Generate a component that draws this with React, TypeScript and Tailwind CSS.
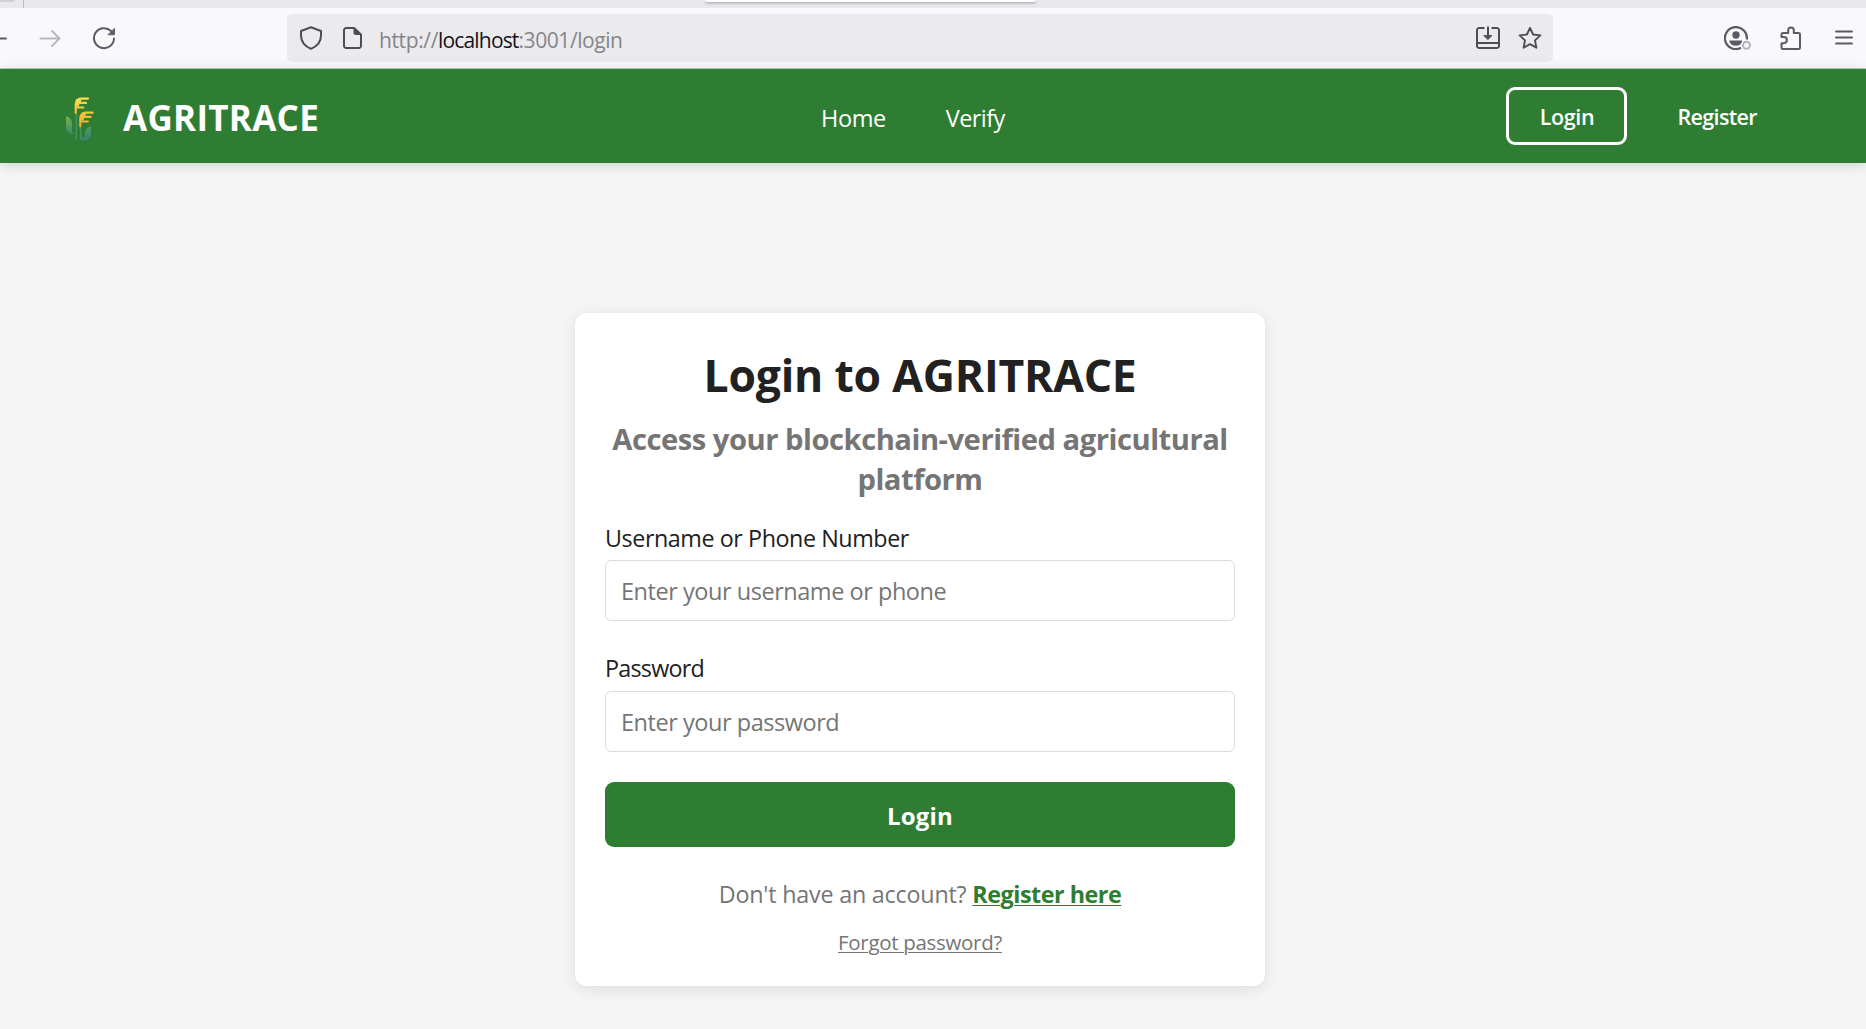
import type { ReactNode } from "react";

function Glyph({ className, children }: { className?: string; children: ReactNode }) {
  return (
    <svg viewBox="0 0 24 24" fill="none" stroke="currentColor" strokeWidth="2" strokeLinecap="round" strokeLinejoin="round" className={`size-6 shrink-0 ${className ?? ""}`}>
      {children}
    </svg>
  );
}

function BrowserChrome() {
  return (
    <header className="flex flex-col text-[#5b5b66]">
      <div className="flex h-2 bg-[#e9e9ed]">
        <div className="h-[2px] w-[15px] rounded-br-sm bg-[#cfcfd4]" />
        <div className="ml-2 w-px bg-[#bdbdc3]" />
        <div className="ml-[681px] h-[2px] w-[331px] rounded-b-[5px] bg-white shadow-[0_1px_3px_rgba(0,0,0,0.4)]" />
      </div>
      <div className="flex h-[61px] items-center border-b border-[#b5d2b8] bg-[#f9f9fb]">
        <Glyph className="-ml-[17px]">
          <path d="M2 12.5h21M11 5l-8 7.500 8 7.500" />
        </Glyph>
        <Glyph className="ml-[31px] text-[#b9b9bf]">
          <path d="M2.500 12.500h18.500M14 5l7.500 7.500-7.500 7.500" />
        </Glyph>
        <Glyph className="ml-[30px]">
          <path d="M22 12.500A10 10 0 1 1 19 5" />
          <path d="M22.500 2.500v6.300h-6.300z" fill="currentColor" strokeWidth="0.800" />
        </Glyph>
        <div className="ml-[171px] flex h-12 w-[1266px] items-center rounded-[5px] bg-[#ebebed] text-[#4d4d55]">
          <Glyph className="ml-3">
            <path d="M12 1.300 22 5v4.500c0 5.800-3.800 10.700-10 13.300C5.800 20.200 2 15.300 2 9.500V5z" />
          </Glyph>
          <Glyph className="ml-[17px]">
            <path d="M14 2H6.200A2.200 2.200 0 0 0 4 4.200v15.600A2.200 2.200 0 0 0 6.200 22h12.600a2.200 2.200 0 0 0 2.200-2.200V8.500z" />
            <path d="M14 2v5a1.500 1.500 0 0 0 1.500 1.500h5.500z" fill="currentColor" strokeWidth="1" />
          </Glyph>
          <div className="flex pt-1 pl-[15px] text-[21px] leading-7 text-[#85858b]">
            <span className="tracking-[-0.37px]">http://</span>
            <span className="tracking-[-0.83px] text-[#15141a]">localhost</span>
            <span className="tracking-[-0.43px]">:3001/login</span>
          </div>
          <Glyph className="mr-[18px] ml-auto">
            <path d="M8.500 2H3.200A2.200 2.200 0 0 0 1 4.200v15.600A2.200 2.200 0 0 0 3.200 22h17.600a2.200 2.200 0 0 0 2.200-2.200V4.200A2.200 2.200 0 0 0 20.800 2h-5.300M1.500 17h21" strokeLinecap="butt" />
            <path d="M12 0.500v10" strokeLinecap="butt" />
            <path d="M8 9.500h8l-4 4z" fill="currentColor" strokeWidth="0.800" />
          </Glyph>
          <Glyph className="mr-[11px]">
            <path d="m12 1.900 3.100 6.600 7.300.9-5.400 5 1.400 7.300L12 18.200l-6.400 3.500L7 14.400l-5.400-5 7.300-.9z" strokeWidth="1.900" />
          </Glyph>
        </div>
        <svg viewBox="0 0 28 24" className="ml-[171px] h-6 w-7 shrink-0" fill="none" stroke="currentColor">
          <path d="M22.800 13.500A11 11 0 1 0 17 21.800" strokeWidth="2.200" />
          <circle cx="12" cy="9" r="3.700" fill="currentColor" stroke="none" />
          <path d="M5.500 14.500h12.500v.8a6.200 4.500 0 0 1-12.500 0z" fill="currentColor" stroke="none" />
          <circle cx="22.500" cy="19.300" r="5.300" fill="#f9f9fb" stroke="none" />
          <circle cx="22.500" cy="19.300" r="3.500" stroke="#b3b3b9" strokeWidth="2" />
        </svg>
        <Glyph className="ml-[27px]">
          <path d="M2.500 21.500v-4.300h2.300a3.100 3.100 0 0 0 0-6.200H2.500V8.500a1.500 1.500 0 0 1 1.500-1.500h5.200V4.300a2.800 2.800 0 0 1 5.600 0V7h4.700a1.500 1.500 0 0 1 1.500 1.500v13a1.500 1.500 0 0 1-1.500 1.500H4a1.500 1.500 0 0 1-1.500-1.500z" />
        </Glyph>
        <Glyph className="ml-[29px]">
          <path d="M4 5.500h16M4 11.500h16M4 17.500h16" />
        </Glyph>
      </div>
    </header>
  );
}

function WheatLogo() {
  return (
    <svg viewBox="0 0 28 44" className="mt-1.5 h-11 w-7" fill="none">
      <defs>
        <linearGradient id="grain" gradientUnits="userSpaceOnUse" x1="0" y1="0" x2="0" y2="30">
          <stop offset="0" stopColor="#fbe04d" />
          <stop offset="1" stopColor="#f0ad2c" />
        </linearGradient>
        <linearGradient id="leaf" x1="0" y1="0" x2="0" y2="1">
          <stop offset="0" stopColor="#76b04c" />
          <stop offset="1" stopColor="#3f8a70" />
        </linearGradient>
        <linearGradient id="blade" x1="0" y1="0" x2="0" y2="1">
          <stop offset="0" stopColor="#529a53" />
          <stop offset="1" stopColor="#377f86" />
        </linearGradient>
      </defs>
      <path d="M10.300 17v26M14.600 31v10.500h4" stroke="#478f5d" strokeWidth="1.500" />
      <path d="M0 19c4 1.500 6 4 6 8v8l2.500 2C3 37 0 34.500 0 29z" fill="url(#leaf)" />
      <path d="M25 29c-4 1.500-6 3.500-6 7v5l-3 1v1.500c6 .5 9-3 9-8z" fill="url(#blade)" />
      <g stroke="url(#grain)" strokeLinecap="round" strokeLinejoin="round">
        <path d="M9.700 16V7.500c0-3.800 2-5.900 5.600-5.900h6.800M11 5.900h9M10.800 10.500h6.500" strokeWidth="2.100" />
        <path d="M11.800 8V5.500l2-2" strokeWidth="3" />
        <path d="M14.300 29.500v-8c0-3.800 2-5.900 5.600-5.900h6.800M15.600 19.900h9M15.400 24.500h6.500" strokeWidth="2.100" />
        <path d="M16.400 22v-2.500l2-2" strokeWidth="3" />
      </g>
    </svg>
  );
}

function NavBar() {
  return (
    <nav className="relative flex h-[94px] items-center bg-[#2e7d32] px-[66px] text-white shadow-[0_2px_12px_rgba(0,0,0,0.15)]">
      <div className="flex w-[755px] items-center gap-[29px]">
        <WheatLogo />
        <span className="pt-1 text-[35px] leading-[46px] font-bold tracking-[0.27px]">AGRITRACE</span>
      </div>
      <div className="flex gap-[60px] pt-[3px] text-[23.5px] leading-8">
        <a className="tracking-[-0.4px]">Home</a>
        <a className="tracking-[-0.6px]">Verify</a>
      </div>
      <div className="ml-auto flex items-center gap-[50px] pr-[43px] text-[21.5px] font-semibold">
        <a className="flex h-[58px] w-[121px] items-center justify-center rounded-[9px] border-3 border-white pt-0.5 tracking-[-0.38px]">Login</a>
        <a className="pt-0.5 tracking-[-0.64px]">Register</a>
      </div>
    </nav>
  );
}

function Field({ label, type, placeholder, labelClass }: { label: string; type: string; placeholder: string; labelClass: string }) {
  return (
    <label className="flex flex-col text-left">
      <span className={`text-[23.3px] leading-8 text-[#212121] ${labelClass}`}>{label}</span>
      <input
        type={type}
        placeholder={placeholder}
        className="h-[61px] w-full rounded-[6px] border border-[#dcdcdc] px-[15px] text-[23.5px] tracking-[-0.46px] placeholder:text-[#757575] placeholder:opacity-100"
      />
    </label>
  );
}

function LoginCard() {
  return (
    <form className="flex h-[673px] w-[690px] flex-col rounded-xl bg-white p-[30px] text-center shadow-[0_3px_15px_rgba(0,0,0,0.1)]">
      <h1 className="text-[44.5px] leading-16 font-bold tracking-[-0.21px] text-[#212121]">Login to AGRITRACE</h1>
      <h2 className="mt-3 text-[29.2px] leading-10 font-bold tracking-[-0.49px] text-[#757575]">Access your blockchain-verified agricultural platform</h2>
      <div className="mt-[23px] flex flex-col gap-[31px]">
        <Field label="Username or Phone Number" type="text" placeholder="Enter your username or phone" labelClass="mb-1.5 tracking-[-0.43px]" />
        <Field label="Password" type="password" placeholder="Enter your password" labelClass="mb-[7px] tracking-[-0.75px]" />
      </div>
      <button type="button" className="mt-[30px] h-[65px] rounded-[9px] bg-[#2e7d32] pt-0.5 text-2xl font-bold tracking-[0.19px] text-white">
        Login
      </button>
      <p className="mt-[31px] text-[23.3px] leading-8 tracking-[-0.2px] text-[#757575]">
        Don't have an account?{" "}
        <a className="font-bold tracking-[-0.46px] text-[#2e7d32] underline decoration-1 underline-offset-2">Register here</a>
      </p>
      <a className="mt-[18px] text-[20.5px] leading-7 tracking-[-0.31px] text-[#757575] underline decoration-1 underline-offset-2">Forgot password?</a>
    </form>
  );
}

export default function App() {
  return (
    <div className="flex h-[1029px] w-[1866px] flex-col overflow-hidden bg-[#f5f5f5] font-['Open_Sans',sans-serif]">
      <BrowserChrome />
      <NavBar />
      <main className="flex flex-1 items-start pt-[150px] pl-[575px]">
        <LoginCard />
      </main>
    </div>
  );
}
